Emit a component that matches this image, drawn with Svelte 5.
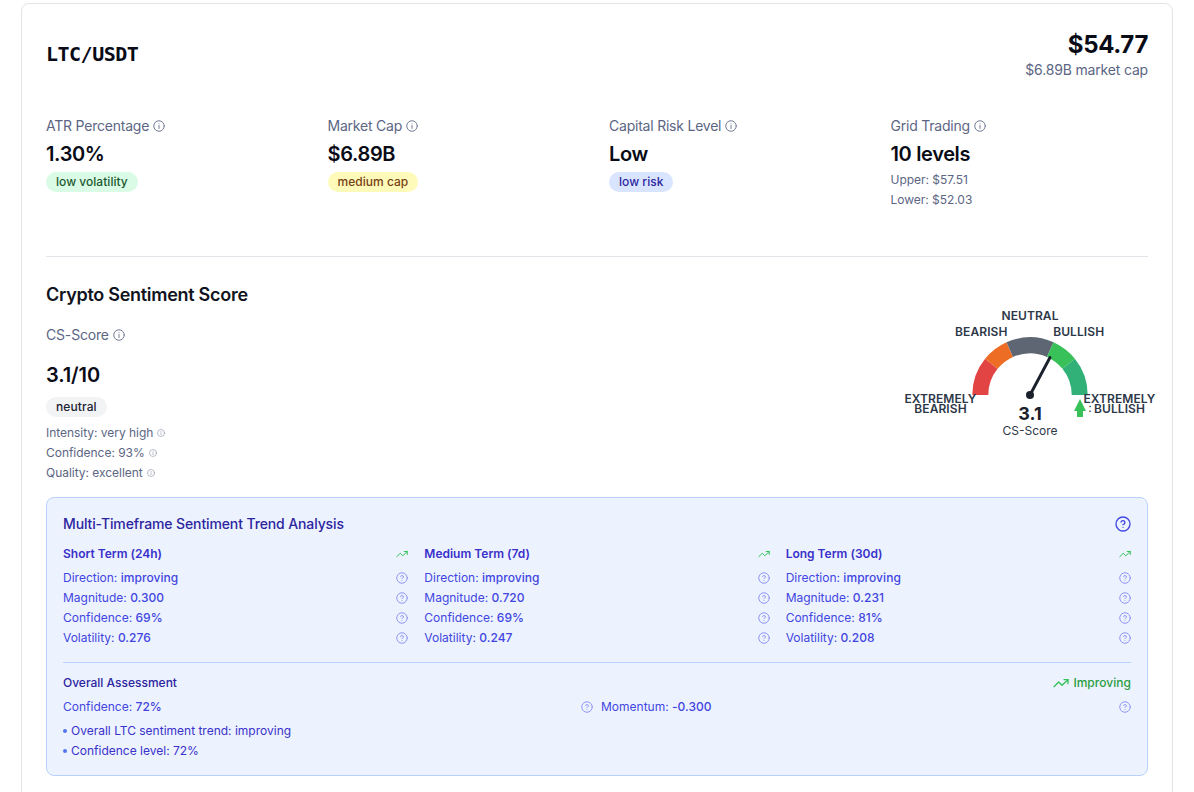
<script lang="ts">
  const ticker = 'LTC/USDT';

  const terms = [
    { title: 'Short Term (24h)', direction: 'improving', magnitude: '0.300', confidence: '69%', volatility: '0.276' },
    { title: 'Medium Term (7d)', direction: 'improving', magnitude: '0.720', confidence: '69%', volatility: '0.247' },
    { title: 'Long Term (30d)', direction: 'improving', magnitude: '0.231', confidence: '81%', volatility: '0.208' },
  ];

  const stats = [
    { label: 'ATR Percentage', value: '1.30%', badge: 'low volatility', tone: 'green' },
    { label: 'Market Cap', value: '$6.89B', badge: 'medium cap', tone: 'yellow' },
    { label: 'Capital Risk Level', value: 'Low', badge: 'low risk', tone: 'blue' },
    { label: 'Grid Trading', value: '10 levels', lines: ['Upper: $57.51', 'Lower: $52.03'] },
  ];

  const details = ['Intensity: very high', 'Confidence: 93%', 'Quality: excellent'];
  const notes = ['Overall LTC sentiment trend: improving', 'Confidence level: 72%'];

  // gauge geometry, angles in degrees from the left end
  const CX = 130;
  const CY = 95;
  const OUTER = 57.7;
  const INNER = 41.7;

  const segments = [
    { from: 0, to: 38.9, color: '#e24444' },
    { from: 38.9, to: 66, color: '#ed6d25' },
    { from: 66, to: 114, color: '#5f6673' },
    { from: 114, to: 141.1, color: '#38c158' },
    { from: 141.1, to: 180, color: '#31b078' },
  ];

  function point(r: number, deg: number) {
    const a = (deg * Math.PI) / 180;
    return `${(CX - r * Math.cos(a)).toFixed(2)} ${(CY - r * Math.sin(a)).toFixed(2)}`;
  }

  function arc(from: number, to: number) {
    return `M${point(OUTER, from)} A${OUTER} ${OUTER} 0 0 1 ${point(OUTER, to)} L${point(INNER, to)} A${INNER} ${INNER} 0 0 0 ${point(INNER, from)} Z`;
  }
</script>

{#snippet info(size: number)}
  <svg class="info" width={size} height={size} viewBox="0 0 24 24" fill="none" stroke="currentColor" stroke-width="2" stroke-linecap="round" stroke-linejoin="round">
    <circle cx="12" cy="12" r="10.5" />
    <path d="M12 17v-6M12 7.5h.01" />
  </svg>
{/snippet}

{#snippet help(size: number)}
  <svg class="help" width={size} height={size} viewBox="0 0 24 24" fill="none" stroke="currentColor" stroke-width="2" stroke-linecap="round" stroke-linejoin="round">
    <circle cx="12" cy="12" r="10.5" />
    <path d="M9.09 9a3 3 0 0 1 5.83 1c0 2-3 3-3 3M12 17h.01" />
  </svg>
{/snippet}

{#snippet trend(size: number)}
  <svg class="trend" width={size} height={size} viewBox="0 0 24 24" fill="none" stroke="currentColor" stroke-width="2" stroke-linecap="round" stroke-linejoin="round">
    <polyline points="22.5 7 13.5 15.5 8.5 10.5 1.5 17.5" />
    <polyline points="16.5 7 22.5 7 22.5 13" />
  </svg>
{/snippet}

{#snippet metric(label: string, value: string)}
  <div class="metric">
    <span>{label}: <b>{value}</b></span>
    {@render help(12)}
  </div>
{/snippet}

<main class="card">
  <header class="top">
    <h1>{ticker}</h1>
    <div class="price">
      <div class="price-value">$54.77</div>
      <div class="price-cap">$6.89B market cap</div>
    </div>
  </header>

  <section class="stats">
    {#each stats as stat}
      <div class="stat">
        <div class="label">{stat.label} {@render info(12)}</div>
        <div class="value">{stat.value}</div>
        {#if stat.badge}
          <span class="badge {stat.tone}">{stat.badge}</span>
        {/if}
        {#each stat.lines ?? [] as line}
          <div class="small">{line}</div>
        {/each}
      </div>
    {/each}
  </section>

  <section class="sentiment">
    <h2>Crypto Sentiment Score</h2>
    <div class="score-row">
      <div class="score">
        <div class="label">CS-Score {@render info(12)}</div>
        <div class="value">3.1/10</div>
        <span class="badge gray">neutral</span>
        {#each details as detail}
          <div class="small">{detail} <span class="faint">{@render info(8)}</span></div>
        {/each}
      </div>

      <svg class="gauge" width="260" height="140" viewBox="0 0 260 140">
        {#each segments as s}
          <path d={arc(s.from, s.to)} fill={s.color} />
        {/each}
        <line x1={CX} y1={CY} x2="150" y2="57.5" stroke="#1a202c" stroke-width="2.9" stroke-linecap="round" />
        <circle cx={CX} cy={CY} r="4" fill="#1a202c" />
        <path d="M180 99l6 12h-3v6h-6v-6h-3z" fill="#38c158" />
        <g class="zone">
          <text x="130" y="20">NEUTRAL</text>
          <text x="81.3" y="36">BEARISH</text>
          <text x="178.7" y="36">BULLISH</text>
          <text x="40.5" y="103">EXTREMELY</text>
          <text x="40.5" y="113">BEARISH</text>
          <text x="219.5" y="103">EXTREMELY</text>
          <text x="219.5" y="113">BULLISH</text>
        </g>
        <text class="dots" x="190" y="112">:</text>
        <text class="gauge-value" x="130" y="120">3.1</text>
        <text class="gauge-label" x="130" y="135">CS-Score</text>
      </svg>
    </div>

    <div class="panel">
      <div class="panel-head">
        <h3>Multi-Timeframe Sentiment Trend Analysis</h3>
        {@render help(16)}
      </div>

      <div class="terms">
        {#each terms as term}
          <div>
            <div class="term-head">
              <span>{term.title}</span>
              {@render trend(12)}
            </div>
            <div class="metrics">
              {@render metric('Direction', term.direction)}
              {@render metric('Magnitude', term.magnitude)}
              {@render metric('Confidence', term.confidence)}
              {@render metric('Volatility', term.volatility)}
            </div>
          </div>
        {/each}
      </div>

      <div class="overall">
        <div class="overall-head">
          <span>Overall Assessment</span>
          <span class="direction">{@render trend(16)} Improving</span>
        </div>
        <div class="pair">
          {@render metric('Confidence', '72%')}
          {@render metric('Momentum', '-0.300')}
        </div>
        <ul>
          {#each notes as note}
            <li>{note}</li>
          {/each}
        </ul>
      </div>
    </div>
  </section>
</main>

<style>
  :global(body) {
    background: #fff;
    overflow: hidden;
    font-family: Inter, 'Liberation Sans', sans-serif;
  }
  h1,
  h2,
  h3,
  ul {
    margin: 0;
    padding: 0;
  }
  svg {
    flex-shrink: 0;
    display: block;
  }
  .card {
    box-sizing: border-box;
    width: 1152px;
    min-height: 820px;
    margin: 3px 0 0 21px;
    padding: 24px;
    border: 1px solid #e2e4e9;
    border-radius: 8px;
    color: #090b16;
  }
  .top {
    display: flex;
    justify-content: space-between;
    align-items: center;
  }
  h1 {
    font: 700 20px/28px 'DejaVu Sans Mono', monospace;
    letter-spacing: -0.5px;
  }
  .price {
    text-align: right;
  }
  .price-value {
    padding-top: 1px;
    font-size: 24px;
    line-height: 31px;
    font-weight: 700;
    letter-spacing: -0.35px;
  }
  .price-cap,
  .label {
    font-size: 14px;
    line-height: 20px;
    letter-spacing: -0.17px;
    color: #5c6684;
  }
  .stats {
    display: grid;
    grid-template-columns: repeat(4, 1fr);
    gap: 24px;
    height: 140px;
    margin-top: 36px;
    border-bottom: 1px solid #e2e4e9;
  }
  .label {
    display: flex;
    align-items: center;
    gap: 4px;
  }
  .stat .label {
    letter-spacing: -0.22px;
  }
  .info {
    opacity: 0.85;
  }
  .value {
    margin: 4px 0;
    font-size: 20px;
    line-height: 28px;
    font-weight: 600;
    letter-spacing: -0.35px;
  }
  .badge {
    display: block;
    width: fit-content;
    padding: 2px 10px;
    border-radius: 10px;
    font-size: 12px;
    line-height: 16px;
    font-weight: 500;
    letter-spacing: 0.03px;
  }
  .green {
    background: #dafce6;
    color: #1d592f;
  }
  .yellow {
    background: #fefab9;
    color: #774214;
  }
  .blue {
    background: #d9e5ff;
    color: #2d259f;
  }
  .gray {
    background: #f2f3f5;
    color: #1c2333;
    letter-spacing: 0.1px;
  }
  .small {
    display: flex;
    align-items: center;
    gap: 4px;
    margin-bottom: 4px;
    font-size: 12px;
    line-height: 16px;
    letter-spacing: -0.03px;
    color: #5c6684;
  }
  .faint {
    opacity: 0.75;
  }
  .sentiment {
    padding-top: 24px;
  }
  h2 {
    font-size: 18px;
    line-height: 28px;
    font-weight: 600;
    letter-spacing: -0.28px;
    color: #101320;
  }
  .score-row {
    display: flex;
    justify-content: space-between;
    height: 172px;
  }
  .score {
    padding-top: 16px;
  }
  .score .value {
    margin: 16px 0 8px;
    letter-spacing: -0.1px;
  }
  .score .badge {
    margin-bottom: 8px;
  }
  .gauge {
    margin: -9px -12px 0 0;
    overflow: visible;
  }
  .gauge text {
    text-anchor: middle;
    fill: #2d3748;
    font-size: 12px;
  }
  .gauge .zone text {
    font-weight: 600;
    letter-spacing: 0.08px;
  }
  .gauge .gauge-value {
    font-size: 18px;
    font-weight: 700;
    fill: #1a202c;
  }
  .panel {
    margin-top: 16px;
    padding: 16px;
    border: 1px solid #b9d2fb;
    border-radius: 8px;
    background: #ecf3ff;
    font-size: 12px;
    line-height: 16px;
    color: #4245e0;
  }
  .panel-head,
  .term-head,
  .overall-head,
  .metric {
    display: flex;
    align-items: center;
    justify-content: space-between;
  }
  .panel-head {
    margin-bottom: 12px;
  }
  h3 {
    font-size: 14px;
    line-height: 20px;
    font-weight: 500;
    letter-spacing: -0.12px;
    color: #2d259f;
  }
  .terms {
    display: grid;
    grid-template-columns: repeat(3, 1fr);
    gap: 16px;
  }
  .term-head {
    margin-bottom: 8px;
    font-weight: 600;
    color: #3a30ca;
  }
  .trend {
    color: #34c157;
  }
  .metrics {
    display: grid;
    gap: 4px;
  }
  .metric b {
    font-weight: 500;
    letter-spacing: 0.05px;
  }
  .metric .help {
    color: #9095f5;
  }
  .overall {
    margin-top: 16px;
    padding-top: 12px;
    border-top: 1px solid #b9d2fb;
  }
  .overall-head {
    font-weight: 500;
    color: #2d259f;
  }
  .direction {
    display: flex;
    align-items: center;
    gap: 4px;
    letter-spacing: 0.03px;
    color: #2a9d42;
  }
  .pair {
    display: grid;
    grid-template-columns: 1fr 1fr;
    gap: 8px;
    margin: 8px 0;
  }
  ul {
    display: grid;
    gap: 4px;
    list-style: none;
    color: #3a30ca;
  }
  li {
    display: flex;
    align-items: center;
    gap: 4px;
  }
  li::before {
    content: '';
    width: 4px;
    height: 4px;
    border-radius: 50%;
    background: #5274f5;
  }
</style>
